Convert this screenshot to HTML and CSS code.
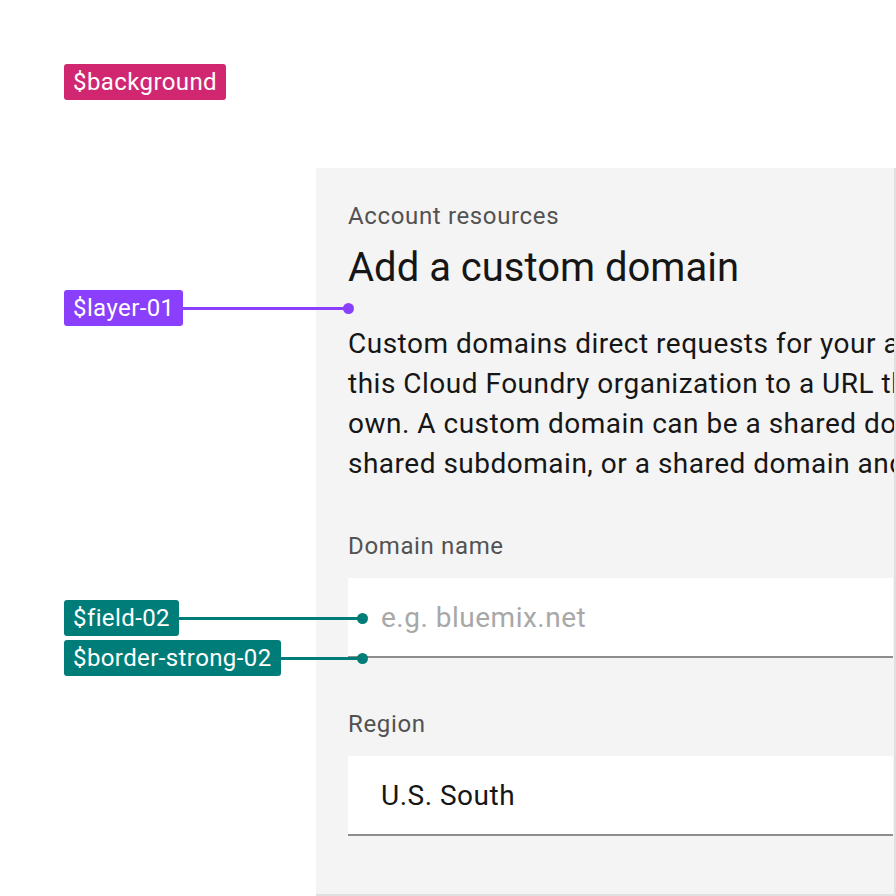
FILE: index.html
```html
<!DOCTYPE html>
<html lang="en">
<head>
<meta charset="utf-8">
<title>Add a custom domain</title>
<link rel="stylesheet" href="styles.css">
</head>
<body>
<div class="stage">
  <section class="panel">
    <p class="eyebrow">Account resources</p>
    <h1 class="title">Add a custom domain</h1>
    <p class="body">Custom domains direct requests for your applications in<br>this Cloud Foundry organization to a URL that you<br>own. A custom domain can be a shared domain, a<br>shared subdomain, or a shared domain and host.</p>
    <label class="field-label label-domain">Domain name</label>
    <div class="field"><span class="placeholder">e.g. bluemix.net</span></div>
    <label class="field-label label-region">Region</label>
    <div class="field"><span class="value">U.S. South</span></div>
  </section>

  <div class="annot annot-bg"><span class="badge badge-magenta">$background</span></div>
  <div class="annot annot-layer"><span class="badge badge-purple">$layer-01</span><span class="leader leader-purple"></span><span class="dot dot-purple"></span></div>
  <div class="annot annot-field"><span class="badge badge-teal">$field-02</span><span class="leader leader-teal"></span><span class="dot dot-teal"></span></div>
  <div class="annot annot-border"><span class="badge badge-teal">$border-strong-02</span><span class="leader leader-teal"></span><span class="dot dot-teal"></span></div>
</div>
</body>
</html>
```
FILE: styles.css
```css
* { box-sizing: border-box; }
html, body { margin: 0; padding: 0; background: #ffffff; }
body {
  width: 896px;
  height: 896px;
  overflow: hidden;
  font-family: Roboto, "Noto Sans", sans-serif;
  color: #161616;
}
.stage {
  position: relative;
  width: 896px;
  height: 896px;
  padding: 168px 0 0 316px;
}
.panel {
  width: 580px;
  height: 728px;
  background: #f4f4f4;
  border-right: 2px solid #e0e0e0;
  border-bottom: 2px solid #e0e0e0;
  padding: 32px 0 0 32px;
  overflow: hidden;
  display: flex;
  flex-direction: column;
}
.panel > * { flex: none; }
.eyebrow {
  margin: 0;
  font-size: 24px;
  line-height: 32px;
  letter-spacing: 0.64px;
  color: #525252;
  white-space: nowrap;
}
.title {
  margin: 8px 0 0;
  font-size: 40px;
  line-height: 56px;
  font-weight: 400;
  color: #161616;
  white-space: nowrap;
}
.body {
  margin: 28px 0 0;
  font-size: 28px;
  line-height: 40px;
  letter-spacing: 0.5px;
  color: #161616;
  white-space: nowrap;
}
.field-label {
  display: block;
  font-size: 24px;
  line-height: 32px;
  letter-spacing: 0.64px;
  color: #525252;
}
.label-domain { margin-top: 46px; }
.label-region { margin-top: 50px; }
.field {
  margin-top: 16px;
  width: 545px;
  height: 80px;
  background: #ffffff;
  border-bottom: 2px solid #8d8d8d;
  padding: 0 0 0 33px;
  display: flex;
  align-items: center;
  font-size: 28px;
  letter-spacing: 0.5px;
}
.placeholder { color: #a8a8a8; }
.value { color: #161616; }

.annot {
  position: absolute;
  left: 64px;
  display: flex;
  align-items: center;
}
.annot-bg { top: 64px; }
.annot-layer { top: 290px; width: 290px; }
.annot-field { top: 600px; width: 304px; }
.annot-border { top: 640px; width: 304px; }
.badge {
  flex: none;
  height: 36px;
  padding: 0 9px;
  border-radius: 3px;
  color: #ffffff;
  font-size: 24px;
  line-height: 36px;
  letter-spacing: 0.4px;
  white-space: nowrap;
}
.badge-magenta { background: #d12771; }
.badge-purple { background: #8a3ffc; }
.badge-teal { background: #007d79; }
.leader { flex: 1; height: 3px; }
.leader-purple { background: #8a3ffc; }
.leader-teal { background: #007d79; }
.dot {
  flex: none;
  width: 11px;
  height: 11px;
  border-radius: 50%;
  margin-left: -5px;
}
.dot-purple { background: #8a3ffc; }
.dot-teal { background: #007d79; }
```
